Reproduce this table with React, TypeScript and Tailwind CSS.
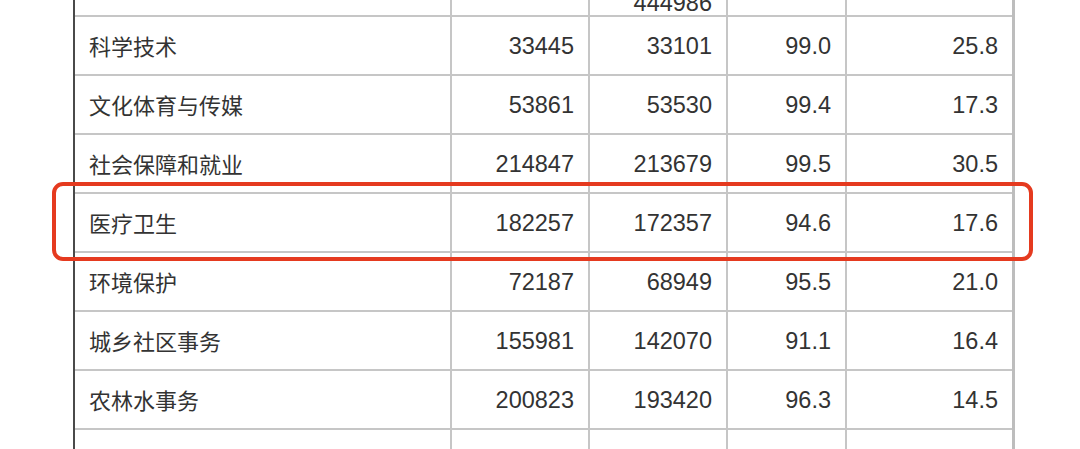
const rows: [string, string, string, string, string][] = [
  ["", "", "444986", "", ""],
  ["科学技术", "33445", "33101", "99.0", "25.8"],
  ["文化体育与传媒", "53861", "53530", "99.4", "17.3"],
  ["社会保障和就业", "214847", "213679", "99.5", "30.5"],
  ["医疗卫生", "182257", "172357", "94.6", "17.6"],
  ["环境保护", "72187", "68949", "95.5", "21.0"],
  ["城乡社区事务", "155981", "142070", "91.1", "16.4"],
  ["农林水事务", "200823", "193420", "96.3", "14.5"],
  ["交通运输", "", "", "", ""],
];

const widths = ["w-[377px]", "w-[138px]", "w-[138px]", "w-[119px]", "w-[165px]"];

function Row({ cells, first }: { cells: string[]; first: boolean }) {
  return (
    <div className="flex h-[59px] border-b-2 border-[#c6c6c6]">
      <div className="flex items-center w-[377px] pl-[14px] border-r-2 border-[#c6c6c6] text-[22px] font-['Noto_Sans_CJK_SC',sans-serif]">
        {cells[0]}
      </div>
      {cells.slice(1).map((c, i) => (
        <div
          key={i}
          className={`flex justify-end pr-[14px] text-[23.5px] leading-[24px] ${widths[i + 1]} ${
            first ? "items-end pb-0" : "items-center"
          } ${i < 3 ? "border-r-2 border-[#c6c6c6]" : ""}`}
        >
          {c}
        </div>
      ))}
    </div>
  );
}

export default function App() {
  return (
    <div className="relative h-[449px] w-[1080px] overflow-hidden bg-white text-[#333] font-['Liberation_Sans','Noto_Sans_CJK_SC',sans-serif]">
      <div className="ml-[73px] mt-[-42px] w-[942px] border-l-2 border-r-[3px] border-l-[#4a4a4a] border-r-[#bdbdbd]">
        {rows.map((r, i) => (
          <Row key={i} cells={r} first={i === 0} />
        ))}
      </div>
      {/* 标注框 */}
      <div className="absolute left-[52px] top-[182px] w-[981px] h-[79px] border-4 border-[#e53a1f] rounded-[11px]" />
    </div>
  );
}
